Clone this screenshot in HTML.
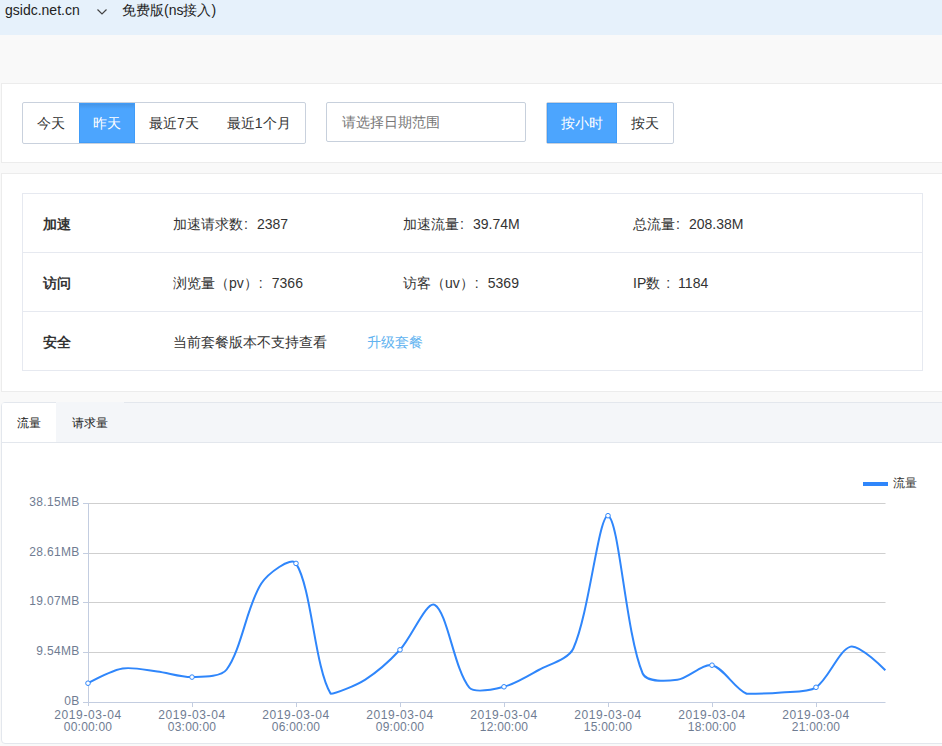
<!DOCTYPE html>
<html><head><meta charset="utf-8">
<style>
*{margin:0;padding:0;box-sizing:border-box}
html,body{width:942px;height:746px;overflow:hidden;background:#f9f9f9;font-family:"Liberation Sans",sans-serif;color:#333;font-size:14px}
.abs{position:absolute}
#top{left:0;top:0;width:942px;height:35px;background:#e6f1fb}
.panel{position:absolute;left:1px;width:960px;background:#fff;border:1px solid #ececec}
.btns{position:absolute;top:102px;height:42px;border:1px solid #c9d1dd;border-radius:2px;background:#fff;display:flex}
.btns div{height:40px;line-height:40px;padding:0 14px;white-space:nowrap}
.btns .on{background:#4ca5fe;color:#fff;box-shadow:inset 0 0 0 1px #409cf8}
.c{display:inline-block;width:14px;padding-left:1px}
.txt{position:absolute;white-space:nowrap;line-height:16px}
</style></head><body>
<div id="top" class="abs"></div>
<div class="txt" style="left:5px;top:2px;color:#222">gsidc.net.cn</div>
<svg class="abs" style="left:95px;top:6px" width="14" height="12"><path d="M2.5 3.5 L7 8 L11.5 3.5" fill="none" stroke="#444" stroke-width="1.2"/></svg>
<div class="txt" style="left:122px;top:2px;color:#222">免费版(ns接入)</div>

<div class="panel" style="top:83px;height:80px"></div>
<div class="btns" style="left:22px;width:284px">
 <div>今天</div><div class="on" style="background:linear-gradient(#4592e2,#4ca5fe 6px)">昨天</div><div>最近7天</div><div>最近1个月</div>
</div>
<div class="abs" style="left:326px;top:102px;width:200px;height:40px;border:1px solid #c7d0dc;border-radius:2px;background:#fff"></div>
<div class="txt" style="left:342px;top:114px;color:#777">请选择日期范围</div>
<div class="btns" style="left:546px;width:128px">
 <div class="on">按小时</div><div>按天</div>
</div>

<div class="panel" style="top:173px;height:219px"></div>
<div class="abs" style="left:22px;top:193px;width:901px;height:178px;border:1px solid #e6e9f0"></div>
<div class="abs" style="left:23px;top:252px;width:899px;height:1px;background:#e6e9f0"></div>
<div class="abs" style="left:23px;top:311px;width:899px;height:1px;background:#e6e9f0"></div>
<div class="txt" style="left:43px;top:216px;font-weight:bold">加速</div>
<div class="txt" style="left:173px;top:216px">加速请求数<span class="c">:</span>2387</div>
<div class="txt" style="left:403px;top:216px">加速流量<span class="c">:</span>39.74M</div>
<div class="txt" style="left:633px;top:216px">总流量<span class="c">:</span>208.38M</div>
<div class="txt" style="left:43px;top:275px;font-weight:bold">访问</div>
<div class="txt" style="left:173px;top:275px">浏览量（pv）<span class="c">:</span>7366</div>
<div class="txt" style="left:403px;top:275px">访客（uv）<span class="c">:</span>5369</div>
<div class="txt" style="left:633px;top:275px">IP数<span class="c" style="padding-left:6px">:</span> 1184</div>
<div class="txt" style="left:43px;top:334px;font-weight:bold">安全</div>
<div class="txt" style="left:173px;top:334px">当前套餐版本不支持查看</div>
<div class="txt" style="left:367px;top:334px;color:#62b3f0">升级套餐</div>

<div class="abs" style="left:1px;top:402px;width:960px;height:342px;background:#fff;border:1px solid #e3e7ed;border-radius:4px"></div>
<div class="abs" style="left:2px;top:403px;width:940px;height:40px;background:#f4f6f9;border-bottom:1px solid #e3e7ed"></div>
<div class="abs" style="left:56px;top:402px;width:68px;height:2px;background:#f4f6f9"></div>
<div class="abs" style="left:2px;top:403px;width:54px;height:39px;background:#fff;border-top-left-radius:3px"></div>
<div class="txt" style="left:17px;top:415px;font-size:12px;color:#222">流量</div>
<div class="txt" style="left:72px;top:415px;font-size:12px;color:#222">请求量</div>

<svg class="abs" style="left:0;top:0" width="942" height="746">
 <g stroke="#cfcfcf" stroke-width="1" fill="none">
  <path d="M88 503.5H885.5M88 553.5H885.5M88 602.5H885.5M88 652.5H885.5"/>
 </g>
 <g stroke="#c3cde0" stroke-width="1" fill="none">
  <path d="M88.5 503V706M83 503.5H88M83 553.5H88M83 602.5H88M83 652.5H88M83 702.5H885.5"/>
  <path d="M192.5 702V707M296.5 702V707M400.5 702V707M504.5 702V707M608.5 702V707M712.5 702V707M816.5 702V707"/>
 </g>
 <g font-family="Liberation Sans" font-size="12" fill="#6f7c92" text-anchor="end" letter-spacing="0.3">
  <text x="79.5" y="506">38.15MB</text><text x="79.5" y="556">28.61MB</text><text x="79.5" y="605">19.07MB</text><text x="79.5" y="655">9.54MB</text><text x="79.5" y="705">0B</text>
 </g>
 <g font-family="Liberation Sans" font-size="12" fill="#6f7c92" text-anchor="middle" letter-spacing="0.6"><text x="88" y="719">2019-03-04</text><text x="192" y="719">2019-03-04</text><text x="296" y="719">2019-03-04</text><text x="400" y="719">2019-03-04</text><text x="504" y="719">2019-03-04</text><text x="608" y="719">2019-03-04</text><text x="712" y="719">2019-03-04</text><text x="816" y="719">2019-03-04</text></g>
<g font-family="Liberation Sans" font-size="12" fill="#6f7c92" text-anchor="middle" letter-spacing="0.2"><text x="88" y="731">00:00:00</text><text x="192" y="731">03:00:00</text><text x="296" y="731">06:00:00</text><text x="400" y="731">09:00:00</text><text x="504" y="731">12:00:00</text><text x="608" y="731">15:00:00</text><text x="712" y="731">18:00:00</text><text x="816" y="731">21:00:00</text></g>
 <path d="M88.00 683.20 C88.00 683.20 111.86 670.32 122.67 668.50 C132.66 666.81 146.98 670.22 157.33 671.50 C167.78 672.80 181.66 677.40 192.00 677.10 C202.46 676.80 220.91 677.27 226.67 669.50 C241.71 649.19 246.81 605.73 261.33 583.50 C267.61 573.90 291.24 555.82 296.00 563.40 C312.04 588.91 314.39 666.52 330.67 693.80 C335.19 693.80 355.97 685.55 365.33 679.60 C376.77 672.35 390.73 659.81 400.00 649.80 C411.53 637.37 426.61 600.41 434.67 604.80 C447.41 611.75 454.33 669.85 469.33 687.60 C475.13 693.80 494.15 689.30 504.00 686.80 C514.95 684.02 528.56 675.58 538.67 670.00 C549.36 664.09 568.57 659.11 573.33 648.50 C589.37 612.82 598.45 515.70 608.00 515.70 C619.25 519.76 625.59 633.08 642.67 673.50 C646.39 682.31 667.27 681.00 677.33 679.80 C688.07 678.51 702.52 663.29 712.00 665.20 C723.32 667.49 734.93 689.18 746.67 693.80 C755.73 693.80 770.99 693.47 781.33 692.50 C791.79 691.52 807.76 692.75 816.00 687.30 C828.56 678.98 839.02 649.46 850.67 646.60 C859.82 644.36 885.33 670.30 885.33 670.30" fill="none" stroke="#2f86fb" stroke-width="2" stroke-linejoin="round"/>
 <g fill="#fff" stroke="#2f86fb" stroke-width="1"><circle cx="88.00" cy="683.20" r="2.3"/><circle cx="192.00" cy="677.10" r="2.3"/><circle cx="296.00" cy="563.40" r="2.3"/><circle cx="400.00" cy="649.80" r="2.3"/><circle cx="504.00" cy="686.80" r="2.3"/><circle cx="608.00" cy="515.70" r="2.3"/><circle cx="712.00" cy="665.20" r="2.3"/><circle cx="816.00" cy="687.30" r="2.3"/></g>
 <rect x="863" y="482" width="25" height="4" fill="#2f86fb"/>
 <text x="893" y="487" font-size="12" fill="#333">流量</text>
</svg>
</body></html>
